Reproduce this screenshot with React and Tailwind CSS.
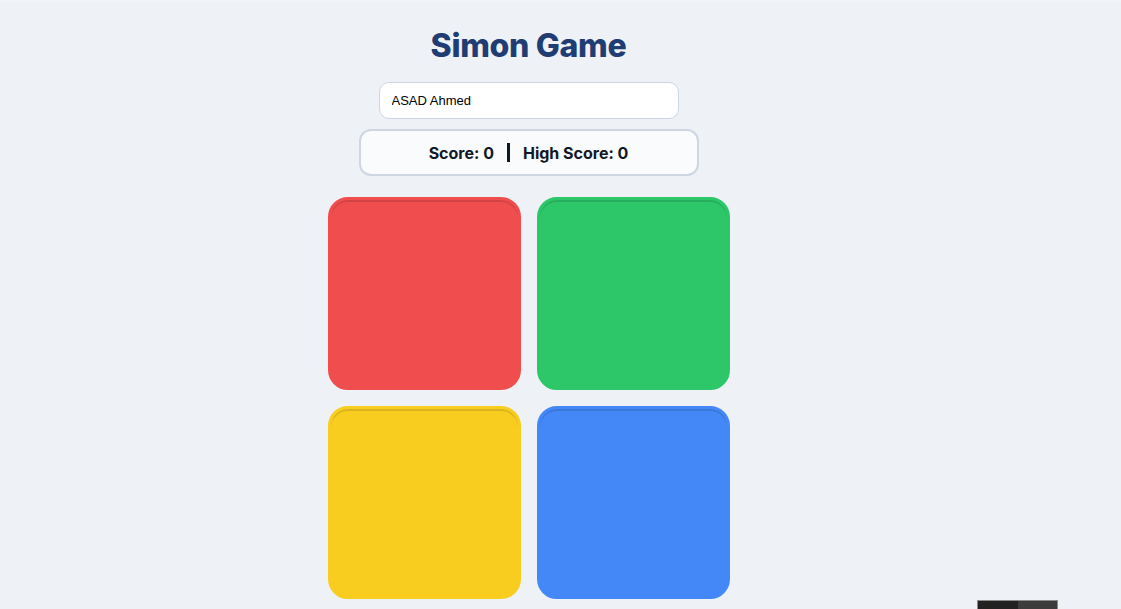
export default function App() {
    const pads = [
        { id: "red", cls: "bg-[#f04e4e] border-[#f04e4e]" },
        { id: "green", cls: "bg-[#2dc76a] border-[#2dc76a]" },
        { id: "yellow", cls: "bg-[#f8cd20] border-[#f8cd20]" },
        { id: "blue", cls: "bg-[#4488f8] border-[#4488f8]" },
    ];

    return (
        <div className="relative min-h-[609px] overflow-hidden bg-[#eef1f6] font-['Inter',sans-serif]">
            <div className="h-[2px] bg-[#f1f3f7]" />
            <div className="w-[1057px] flex flex-col items-center">
                {/* Title */}
                <h1 className="mt-[24px] text-[32px] leading-[40px] font-extrabold tracking-[-0.3px] text-[#1f3d73]">
                    Simon Game
                </h1>

                {/* Player name */}
                <input
                    type="text"
                    defaultValue="ASAD Ahmed"
                    className="mt-[16px] w-[300px] h-[37px] px-[12px] rounded-[10px] border border-[#cdd6e2] bg-white text-[13px] text-black font-['Liberation_Sans',Arial,sans-serif] outline-none"
                />

                {/* Scores */}
                <div className="mt-[10px] w-[340px] h-[47px] flex items-center justify-center gap-[13px] rounded-[12px] border-2 border-[#cdd6e2] bg-[#f9fbfd] text-[16px] font-bold text-[#111827]">
                    <span>Score: 0</span>
                    <span className="w-[3px] h-[19px] bg-[#111827]" />
                    <span>High Score: 0</span>
                </div>

                {/* Pads */}
                <div className="mt-[21px] grid grid-cols-2 gap-[16px]">
                    {pads.map((pad) => (
                        <button
                            key={pad.id}
                            className={`w-[193px] h-[193px] rounded-[20px] border-[3px] shadow-[inset_0_2px_0_rgba(0,0,0,0.12)] ${pad.cls}`}
                        />
                    ))}
                </div>
            </div>

            {/* Corner widget */}
            <div className="absolute left-[977px] top-[600px] w-[81px] h-[20px] flex border border-[#8a8a8a]">
                <div className="w-[40px] bg-[#222222]" />
                <div className="flex-1 bg-[#3c3c3c]" />
            </div>
        </div>
    );
}
